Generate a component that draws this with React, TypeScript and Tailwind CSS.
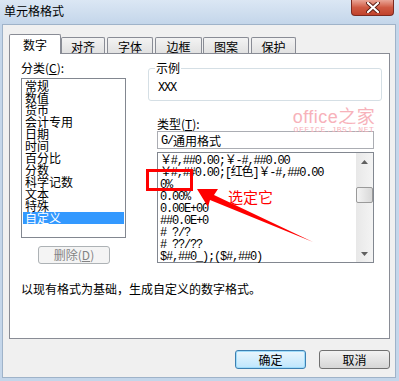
import React from "react";

const categories = ["常规", "数值", "货币", "会计专用", "日期", "时间", "百分比", "分数", "科学记数", "文本", "特殊", "自定义"];

const formats = [
  "￥#,##0.00;￥-#,##0.00",
  "￥#,##0.00;[红色]￥-#,##0.00",
  "0%",
  "0.00%",
  "0.00E+00",
  "##0.0E+0",
  "# ?/?",
  "# ??/??",
  "$#,##0_);($#,##0)",
];

function Tab({ label, active, w }: { label: string; active?: boolean; w: string }) {
  if (active) {
    return (
      <div className={`${w} relative z-10 -mb-px flex h-[20px] items-center justify-center rounded-t-[2px] border border-b-0 border-[#898c95] bg-white pt-[1px]`}>
        {label}
      </div>
    );
  }
  return (
    <div className={`${w} flex h-[16px] items-center justify-center rounded-t-[2px] border border-b-0 border-[#898c95] bg-gradient-to-b from-[#f3f3f3] to-[#e1e1e1] pt-[2px]`}>
      {label}
    </div>
  );
}

export default function App() {
  return (
    <div className="relative flex h-[381px] w-[399px] flex-col overflow-hidden bg-[#c4d6ea] font-['Noto_Sans_CJK_SC','Noto_Sans',sans-serif] text-[12px] leading-[12px] text-black">
      {/* title bar */}
      <div className="flex h-[24px] items-start justify-between bg-gradient-to-b from-[#dbe7f4] to-[#c4d6ea]">
        <div className="pl-[4px] pt-[5px] text-[12px]">单元格格式</div>
        <div className="mr-[5px] flex h-[16px] w-[43px] items-center justify-center rounded-b-[4px] border border-t-0 border-[#7b2a20] bg-gradient-to-b from-[#e9a597] via-[#cf5a43] to-[#c0422c]">
          <svg width="14" height="11" viewBox="0 0 14 11">
            <path d="M2 1 L12 10 M12 1 L2 10" stroke="#5a1d14" strokeWidth="4" strokeLinecap="round" />
            <path d="M2 1 L12 10 M12 1 L2 10" stroke="#ffffff" strokeWidth="2.2" strokeLinecap="round" />
          </svg>
        </div>
      </div>

      {/* dialog body */}
      <div className="mb-[3px] ml-[2px] mr-[3px] flex flex-1 flex-col border border-[#9fb3c9] bg-[#f0f0f0] pl-[6px] pr-[5px] pt-[9px]">
        <div className="flex items-end">
          <Tab label="数字" active w="w-[52px]" />
          <Tab label="对齐" w="w-[44px]" />
          <div className="w-[2px]" />
          <Tab label="字体" w="w-[46px]" />
          <div className="w-[2px]" />
          <Tab label="边框" w="w-[47px]" />
          <div className="w-[1px]" />
          <Tab label="图案" w="w-[46px]" />
          <div className="w-[2px]" />
          <Tab label="保护" w="w-[45px]" />
        </div>

        <div className="h-[286px] border border-[#898c95] bg-white pl-[11px] pt-[8px]">
          <div className="flex gap-[22px]">
            {/* left column */}
            <div className="flex w-[105px] flex-col">
              <div className="h-[12px]">
                分类(<span className="underline">C</span>):
              </div>
              <div className="mt-[4px] h-[160px] border border-[#828790] bg-white pt-[1px]">
                {categories.map((c) => (
                  <div
                    key={c}
                    className={
                      c === "自定义"
                        ? "mx-[1px] h-[12px] bg-[#3399ff] pl-[2px] text-white"
                        : "mx-[1px] h-[12px] pl-[2px]"
                    }
                  >
                    {c}
                  </div>
                ))}
              </div>
              <div className="ml-[17px] mt-[8px] flex h-[18px] w-[72px] items-center justify-center rounded-[3px] border border-[#adb2b5] bg-[#f4f4f4] text-[#838383]">
                删除(<span className="underline">D</span>)
              </div>
            </div>

            {/* right column */}
            <div className="flex w-[234px] flex-col">
              <div className="relative mt-[6px] h-[33px] rounded-[3px] border border-[#d5dfe5] pl-[9px] pt-[13px]">
                <div className="absolute -top-[7px] left-[6px] bg-white px-[1px]">示例</div>
                <div className="font-['Liberation_Mono',monospace] tracking-[-1.2px]">XXX</div>
              </div>
              <div className="ml-[9px] mt-[17px] h-[12px]">
                类型(<span className="underline">T</span>):
              </div>
              <div className="ml-[9px] mt-[1px] flex h-[18px] w-[217px] items-center border border-[#abadb3] bg-white pl-[3px] pt-[1px]">
                <span className="font-['Liberation_Mono',monospace] tracking-[-1.2px]">G/</span>通用格式
              </div>
              <div className="ml-[9px] mt-[3px] flex h-[111px] w-[217px] border border-[#828790] bg-white">
                <div className="flex-1 pl-[2px] pt-[2px] font-['Liberation_Mono','Noto_Sans_CJK_SC',monospace] tracking-[-1.2px]">
                  {formats.map((f) => (
                    <div key={f} className="h-[12px] whitespace-pre">
                      {f}
                    </div>
                  ))}
                </div>
                <div className="flex w-[17px] flex-col bg-gradient-to-r from-[#e8e8e8] to-[#f4f4f4]">
                  <div className="flex h-[17px] items-center justify-center">
                    <svg width="7" height="4" viewBox="0 0 7 4">
                      <path d="M0 4 L3.5 0 L7 4 Z" fill="#606060" />
                    </svg>
                  </div>
                  <div className="mt-[17px] h-[16px] rounded-[2px] border border-[#9a9a9a] bg-gradient-to-r from-[#f4f4f4] to-[#d8d8d8]" />
                  <div className="flex-1" />
                  <div className="flex h-[17px] items-center justify-center">
                    <svg width="7" height="4" viewBox="0 0 7 4">
                      <path d="M0 0 L3.5 4 L7 0 Z" fill="#606060" />
                    </svg>
                  </div>
                </div>
              </div>
            </div>
          </div>

          <div className="mt-[19px]">以现有格式为基础，生成自定义的数字格式。</div>
        </div>

        <div className="mt-[11px] flex justify-end gap-[13px]">
          <div className="flex h-[19px] w-[71px] items-center justify-center rounded-[3px] border border-[#3c7fb1] bg-gradient-to-b from-[#eaf6fd] to-[#bee6fd] shadow-[inset_0_0_0_1px_#9fdcfa]">
            确定
          </div>
          <div className="flex h-[19px] w-[71px] items-center justify-center rounded-[3px] border border-[#707070] bg-gradient-to-b from-[#f2f2f2] to-[#d6d6d6]">
            取消
          </div>
        </div>
      </div>

      {/* watermark */}
      <div className="pointer-events-none absolute left-[292px] top-[106px] flex w-[84px] flex-col items-center text-[#f7b2ba]">
        <div className="whitespace-nowrap font-['Liberation_Sans',sans-serif] text-[18px] leading-[18px] tracking-[0.5px]">
          office<span className="font-['Noto_Sans_CJK_SC',sans-serif]">之家</span>
        </div>
        <div className="whitespace-nowrap font-['Liberation_Mono',monospace] text-[8px] leading-[8px] tracking-[0.6px]">OFFICE.JB51.NET</div>
      </div>

      {/* annotation */}
      <div className="pointer-events-none absolute left-[146px] top-[169px] h-[22px] w-[47px] border-[3px] border-[#ff0000]" />
      <svg className="pointer-events-none absolute left-0 top-0" width="399" height="381" viewBox="0 0 399 381">
        <polygon points="197,189 218,189 214,195 313,242 210,200 208,207" fill="#ff0000" />
      </svg>
      <div className="pointer-events-none absolute left-[228px] top-[189px] text-[15px] leading-[15px] text-[#ff0000]">选定它</div>
    </div>
  );
}
